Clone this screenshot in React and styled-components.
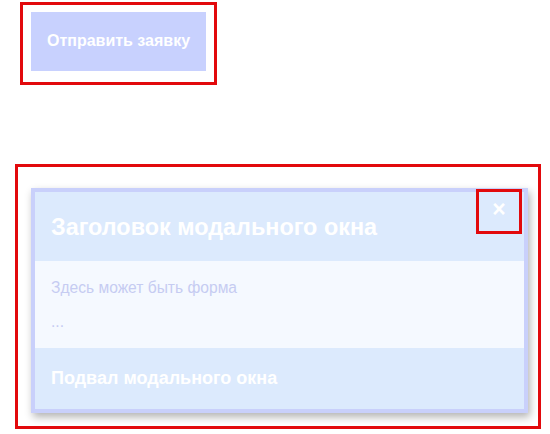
import React from "react";
import styled, { createGlobalStyle } from "styled-components";

const Global = createGlobalStyle`
  html, body { margin: 0; padding: 0; background: #ffffff; }
  body { font-family: "Liberation Sans", Arial, sans-serif; }
`;

const Page = styled.div`
  display: flex;
  flex-direction: column;
  align-items: flex-start;
  padding-top: 2px;
`;

const Outline = styled.div`
  box-sizing: border-box;
  border: 3px solid #e2090c;
  margin-left: ${(p) => p.$left}px;
  margin-top: ${(p) => p.$top || 0}px;
  width: ${(p) => p.$w}px;
  height: ${(p) => p.$h}px;
  padding: ${(p) => p.$pad};
`;

const SubmitButton = styled.button`
  display: flex;
  align-items: center;
  justify-content: center;
  width: 175px;
  height: 59px;
  border: none;
  background: #c8d1fe;
  color: #ffffff;
  font-family: "Liberation Sans", Arial, sans-serif;
  font-weight: bold;
  font-size: 16px;
  padding: 0 0 2px 0;
  cursor: pointer;
`;

const Modal = styled.div`
  position: relative;
  box-sizing: border-box;
  width: 497px;
  height: 225px;
  border: 4px solid #c9d0fb;
  box-shadow: 2px 4px 8px rgba(0, 0, 0, 0.3);
  display: flex;
  flex-direction: column;
  background: #f5f9ff;
`;

const Header = styled.div`
  height: 69px;
  background: #dceafd;
  display: flex;
  align-items: center;
  padding-left: 16px;
  padding-top: 2px;
  box-sizing: border-box;
  color: #ffffff;
  font-weight: bold;
  font-size: 23.4px;
`;

const Body = styled.div`
  height: 87px;
  background: #f5f9ff;
  box-sizing: border-box;
  padding: 18px 16px 0;
  color: #c6ccf2;
  font-size: 15.6px;
  line-height: 18px;
`;

const BodyLine = styled.div`
  margin-bottom: ${(p) => p.$gap || 0}px;
`;

const Footer = styled.div`
  flex: 1;
  background: #dceafd;
  display: flex;
  align-items: center;
  padding-left: 16px;
  color: #ffffff;
  font-weight: bold;
  font-size: 18px;
`;

const CloseButton = styled.button`
  position: absolute;
  top: -3px;
  right: 2px;
  box-sizing: border-box;
  width: 46px;
  height: 45px;
  border: 3px solid #e2090c;
  background: transparent;
  color: #ffffff;
  font-family: "Liberation Sans", Arial, sans-serif;
  font-weight: bold;
  font-size: 23px;
  line-height: 1;
  display: flex;
  align-items: center;
  justify-content: center;
  padding: 0 0 4px 0;
  cursor: pointer;
`;

export default function App() {
  return (
    <>
      <Global />
      <Page>
        <Outline $left={20} $w={197} $h={83} $pad="7px 8px 0 8px">
          <SubmitButton>Отправить заявку</SubmitButton>
        </Outline>
        <Outline $left={15} $top={79} $w={526} $h={265} $pad="21px 0 0 13px">
          <Modal>
            <Header>Заголовок модального окна</Header>
            <Body>
              <BodyLine $gap={16}>Здесь может быть форма</BodyLine>
              <BodyLine>...</BodyLine>
            </Body>
            <Footer>Подвал модального окна</Footer>
            <CloseButton>×</CloseButton>
          </Modal>
        </Outline>
      </Page>
    </>
  );
}
